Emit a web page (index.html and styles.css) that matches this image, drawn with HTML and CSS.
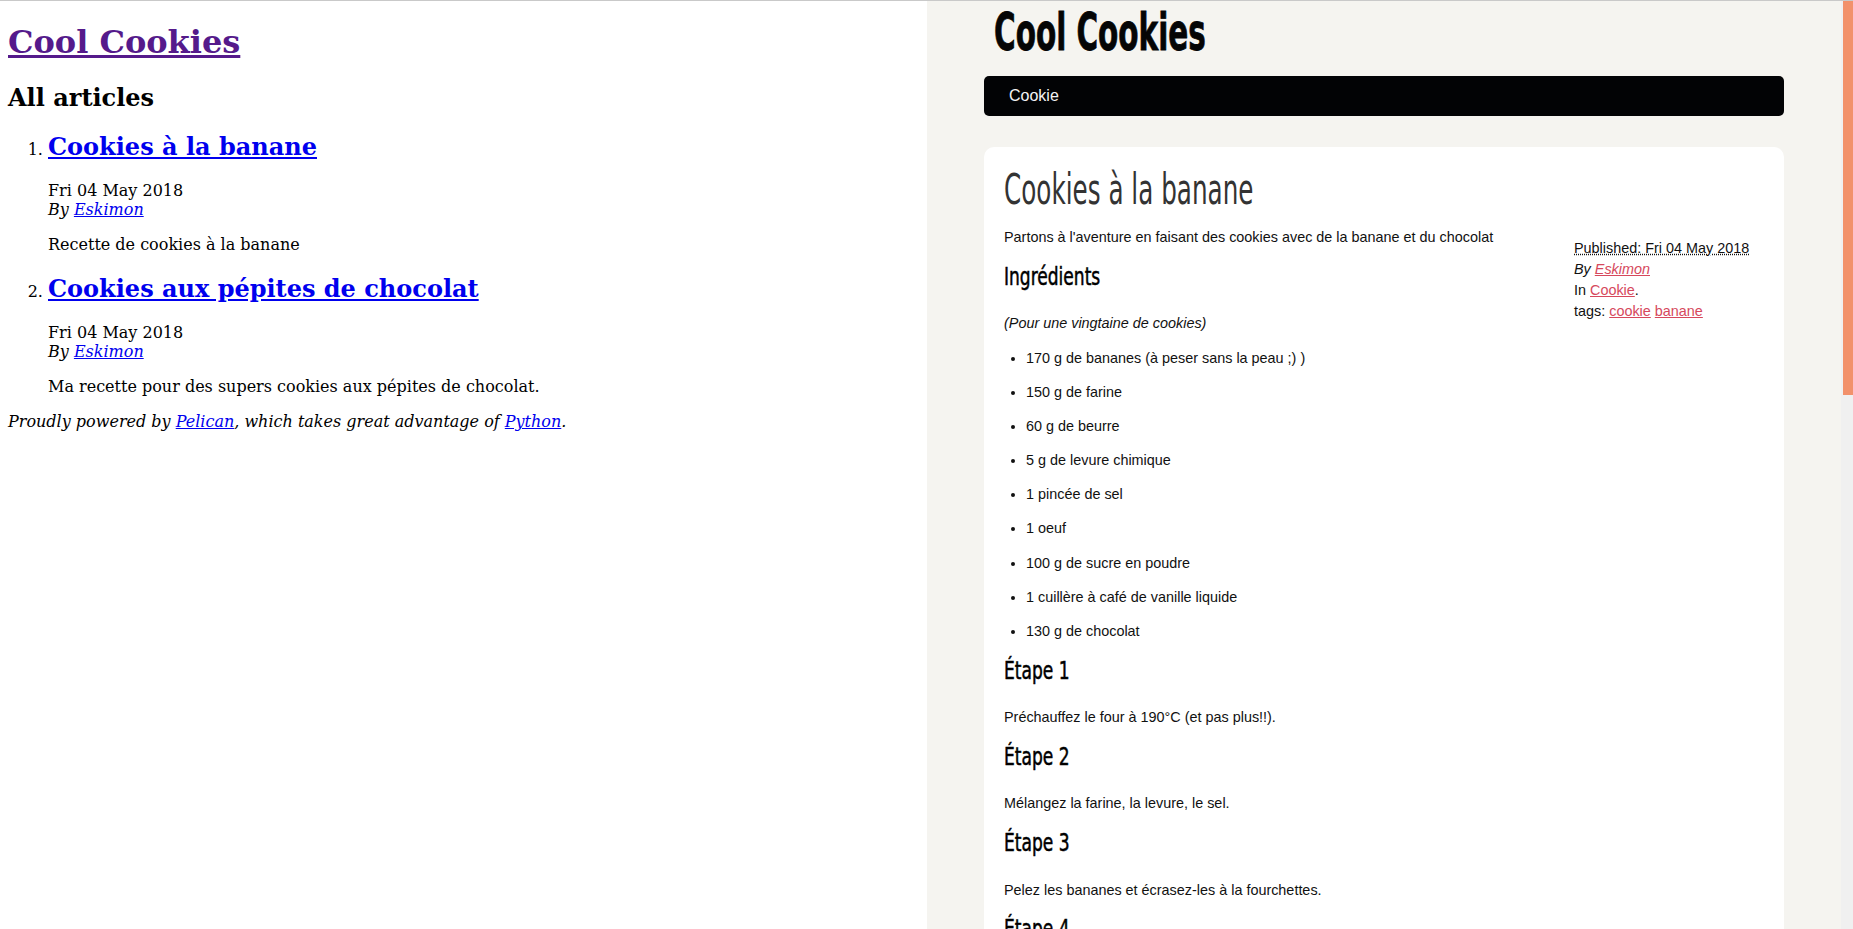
FILE: index.html
```html
<!DOCTYPE html>
<html lang="fr">
<head>
<meta charset="utf-8">
<title>Cool Cookies</title>
<link rel="stylesheet" href="styles.css">
</head>
<body>
<div class="split">
  <div class="pane pane-plain">
    <header>
      <h1 class="site-title"><a class="visited" href="#">Cool Cookies</a></h1>
    </header>
    <section>
      <h1 class="section-title">All articles</h1>
      <ol class="post-list">
        <li>
          <article>
            <h2 class="entry-title"><a href="#">Cookies à la banane</a></h2>
            <footer class="post-info">
              <time>Fri 04 May 2018</time>
              <address>By <a href="#">Eskimon</a></address>
            </footer>
            <p class="summary">Recette de cookies à la banane</p>
          </article>
        </li>
        <li>
          <article>
            <h2 class="entry-title"><a href="#">Cookies aux pépites de chocolat</a></h2>
            <footer class="post-info">
              <time>Fri 04 May 2018</time>
              <address>By <a href="#">Eskimon</a></address>
            </footer>
            <p class="summary">Ma recette pour des supers cookies aux pépites de chocolat.</p>
          </article>
        </li>
      </ol>
    </section>
    <footer class="site-footer">
      <address>Proudly powered by <a href="#">Pelican</a>, which takes great advantage of <a href="#">Python</a>.</address>
    </footer>
  </div>

  <div class="pane pane-theme">
    <div class="viewport">
      <div class="wrap">
        <header class="brand"><span class="cond brand-text">Cool Cookies</span></header>
        <nav class="menu"><a class="menu-link" href="#">Cookie</a></nav>
        <article class="card">
          <h1 class="card-title"><span class="cond">Cookies à la banane</span></h1>
          <div class="card-body">
            <div class="content">
              <p>Partons à l'aventure en faisant des cookies avec de la banane et du chocolat</p>
              <h2><span class="cond">Ingrédients</span></h2>
              <p><em>(Pour une vingtaine de cookies)</em></p>
              <ul>
                <li><p>170 g de bananes (à peser sans la peau ;) )</p></li>
                <li><p>150 g de farine</p></li>
                <li><p>60 g de beurre</p></li>
                <li><p>5 g de levure chimique</p></li>
                <li><p>1 pincée de sel</p></li>
                <li><p>1 oeuf</p></li>
                <li><p>100 g de sucre en poudre</p></li>
                <li><p>1 cuillère à café de vanille liquide</p></li>
                <li><p>130 g de chocolat</p></li>
              </ul>
              <h2><span class="cond">Étape 1</span></h2>
              <p>Préchauffez le four à 190°C (et pas plus!!).</p>
              <h2><span class="cond">Étape 2</span></h2>
              <p>Mélangez la farine, la levure, le sel.</p>
              <h2><span class="cond">Étape 3</span></h2>
              <p>Pelez les bananes et écrasez-les à la fourchettes.</p>
              <h2><span class="cond">Étape 4</span></h2>
              <p>Faites fondre le beurre puis mélangez-le avec le sucre et l'oeuf.</p>
              <h2><span class="cond">Étape 5</span></h2>
              <p>Ajoutez la vanille et les bananes écrasées, puis mélangez bien.</p>
            </div>
            <aside class="meta">
              <div><abbr title="2018-05-04T00:00:00">Published: Fri 04 May 2018</abbr></div>
              <address>By <a href="#">Eskimon</a></address>
              <div>In <a href="#">Cookie</a>.</div>
              <div>tags: <a href="#">cookie</a> <a href="#">banane</a></div>
            </aside>
          </div>
        </article>
      </div>
    </div>
    <div class="scrollbar"><div class="scroll-thumb"></div></div>
  </div>
</div>
</body>
</html>
```

FILE: styles.css
```css
html, body {
  margin: 0;
  padding: 0;
  height: 100%;
  overflow: hidden;
}

.split {
  display: flex;
  height: 929px;
  box-sizing: border-box;
  border-top: 1px solid #c9c9c9;
}

.pane {
  height: 928px;
}

/* ---------- left pane: unstyled Pelican page ---------- */
.pane-plain {
  flex: 0 0 927px;
  box-sizing: border-box;
  padding: 0 8px;
  background: #fff;
  color: #000;
  font-family: "DejaVu Serif", serif;
  font-size: 16px;
  line-height: normal;
}

.pane-plain a {
  color: #0000ee;
}

.pane-plain a.visited {
  color: #551a8b;
}

.site-title {
  font-size: 32px;
  font-weight: bold;
  margin: 21.5px 0 0;
}

.section-title {
  font-size: 24px;
  font-weight: bold;
  margin: 22px 0 0;
}

.post-list {
  margin: 0;
  padding-left: 40px;
}

.entry-title {
  font-size: 24px;
  font-weight: bold;
  margin: 20px 0 0;
}

.post-list li + li .entry-title {
  margin-top: 20.5px;
}

.post-info {
  margin-top: 20px;
}

.post-info address {
  font-style: italic;
}

.summary {
  margin: 16px 0 0;
}

.site-footer {
  margin-top: 16px;
}

.site-footer address {
  font-style: italic;
}

/* ---------- right pane: themed page ---------- */
.pane-theme {
  flex: 1 1 auto;
  display: flex;
  background: #f5f4f0;
  font-family: "Liberation Sans", Arial, sans-serif;
  font-size: 14.4px;
  line-height: 1.375;
  color: #111;
}

.viewport {
  flex: 1 1 auto;
  overflow: hidden;
}

.scrollbar {
  flex: 0 0 12px;
  box-sizing: border-box;
  padding-left: 2px;
  background: #f0f0f0;
}

.scroll-thumb {
  height: 394px;
  background: #f2916b;
}

.wrap {
  width: 800px;
  margin: 0 auto;
}

.pane-theme a {
  color: #d6485c;
}

.cond {
  display: inline-block;
  font-family: "DejaVu Sans Condensed", "DejaVu Sans", sans-serif;
  font-stretch: condensed;
  transform-origin: 0 50%;
  white-space: nowrap;
}

.brand {
  padding: 5px 0 0 10px;
  height: 52px;
}

.brand-text {
  font-size: 52px;
  line-height: 52px;
  font-weight: 700;
  color: #050505;
  -webkit-text-stroke: 0.8px #050505;
  transform: scaleX(0.63);
}

.menu {
  margin-top: 18px;
  height: 40px;
  line-height: 40px;
  padding: 0 25px;
  background: #020305;
  border-radius: 5px;
  font-size: 16px;
}

.menu .menu-link {
  color: #f4f4f4;
  text-decoration: none;
}

.card {
  margin-top: 31px;
  background: #fff;
  border-radius: 10px 10px 0 0;
  padding: 20px 20px 20px;
  min-height: 900px;
}

.card-title {
  margin: 0;
  font-size: 42.5px;
  line-height: 1.1;
  font-weight: normal;
  color: #333;
}

.card-title .cond {
  transform: scaleX(0.645);
}

.card-body {
  display: grid;
  grid-template-columns: 1fr 190px;
  column-gap: 20px;
}

.content p {
  margin: 14.4px 0;
}

.content h2 {
  margin: 16px 0 24px;
  font-size: 24px;
  line-height: 1.1;
  font-weight: normal;
  color: #000;
}

.content h2 .cond {
  -webkit-text-stroke: 0.5px #000;
  transform: scaleX(0.79);
}

.content ul {
  margin: 14.4px 0;
  padding-left: 22px;
}

.meta {
  padding-top: 24px;
  line-height: 21.2px;
}

.meta abbr {
  text-decoration: underline dotted;
}

.meta address {
  font-style: italic;
}
```
